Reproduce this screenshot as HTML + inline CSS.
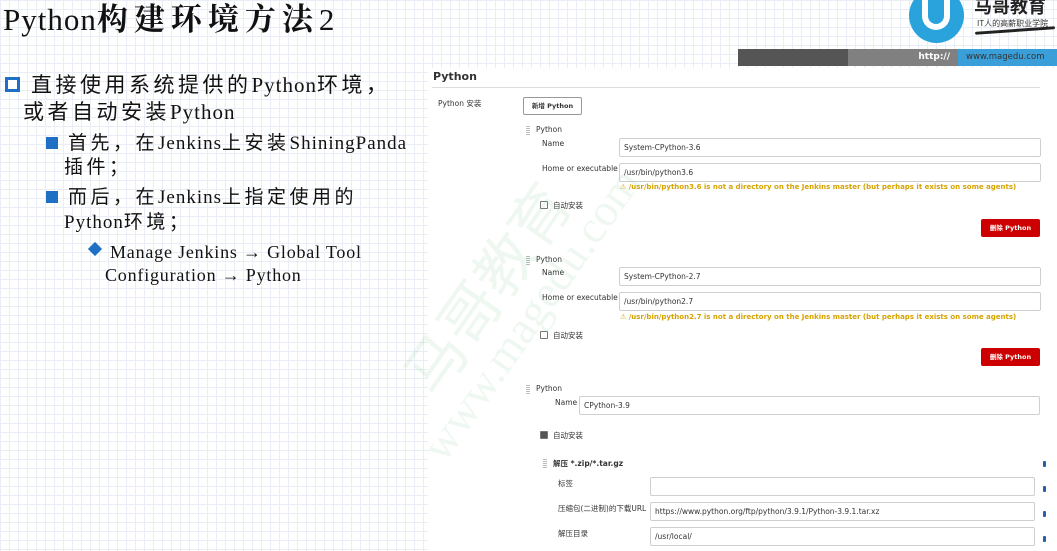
<!DOCTYPE html>
<html><head><meta charset="utf-8"><style>
*{margin:0;padding:0;box-sizing:border-box}
body{width:1057px;height:551px;overflow:hidden;position:relative;background:#fff;
background-image:linear-gradient(#e9edf5 1px,transparent 1px),linear-gradient(90deg,#e9edf5 1px,transparent 1px);background-size:9px 9px;
font-family:"Liberation Serif","Noto Serif CJK SC",serif;color:#111}
.a{position:absolute;white-space:nowrap}
.s{font-family:"Liberation Serif","Noto Sans CJK SC",serif;letter-spacing:3.5px}
.s i{font-style:normal;letter-spacing:1px}
.p{font-family:"DejaVu Sans","Noto Sans CJK SC",sans-serif;color:#333}
.in{position:absolute;border:1px solid #cfcfcf;background:#fff;border-radius:2px;font-family:"DejaVu Sans","Noto Sans CJK SC",sans-serif;font-size:7.5px;color:#333;padding:0 0 0 4px;line-height:17px}
.warn{position:absolute;font-family:"DejaVu Sans",sans-serif;font-size:7px;font-weight:bold;color:#d6a400;white-space:nowrap}
.red{position:absolute;background:#cc0000;color:#fff;font-family:"DejaVu Sans","Noto Sans CJK SC",sans-serif;font-size:6.5px;font-weight:bold;text-align:center;line-height:18px;border-radius:2px;width:59px;height:18px}
.grip{position:absolute;width:4px;height:10px;background:repeating-linear-gradient(#bbb 0 1px,transparent 1px 2px)}
.cb{position:absolute;width:8px;height:8px;border:1px solid #777;border-radius:1px;background:#fff}
.dot{position:absolute;width:3px;height:6px;background:#2a5ea8;border-radius:1px;left:1043px}
</style></head><body>
<div class="a" style="left:3px;top:0;font-size:31px;line-height:40px;letter-spacing:1px;font-family:'Liberation Serif','Noto Serif CJK SC',serif">Python<span style="font-weight:bold;letter-spacing:6px">构建环境方法</span>2</div>

<!-- logo -->
<div class="a" style="left:909px;top:-12px;width:55px;height:55px;border-radius:50%;background:#2aa3dd"></div>
<div class="a" style="left:922px;top:-4px;width:28px;height:34px;border:6px solid #fff;border-top:none;border-radius:0 0 14px 14px"></div>
<div class="a" style="left:974px;top:-7px;font-size:18px;font-weight:bold;font-family:'Noto Sans CJK SC',sans-serif;color:#222">马哥教育</div>
<div class="a" style="left:977px;top:18px;font-size:8px;font-family:'Noto Sans CJK SC',sans-serif;color:#333">IT人的高薪职业学院</div>
<div class="a" style="left:975px;top:29px;width:80px;height:3px;background:#222;transform:rotate(-4deg);border-radius:2px"></div>
<div class="a" style="left:738px;top:49px;width:110px;height:17px;background:#555"></div>
<div class="a" style="left:848px;top:49px;width:110px;height:17px;background:#808080;color:#fff;font:bold 9px/17px 'DejaVu Sans',sans-serif;text-align:right;padding-right:8px">http://</div>
<div class="a" style="left:958px;top:49px;width:99px;height:17px;background:#3a9fd8;color:#333;font:8.5px/17px 'DejaVu Sans',sans-serif;padding-left:8px">www.magedu.com</div>

<!-- left bullets -->
<div class="a" style="left:5px;top:77px;width:15px;height:15px;border:3px solid #1f6fc5;background:#fff"></div>
<div class="a s" style="left:31px;top:72px;font-size:21px;line-height:26px">直接使用系统提供的<i>Python</i>环境，</div>
<div class="a s" style="left:23px;top:99px;font-size:21px;line-height:26px">或者自动安装<i>Python</i></div>
<div class="a" style="left:46px;top:137px;width:12px;height:12px;background:#1f6fc5"></div>
<div class="a s" style="left:68px;top:132px;font-size:19px;line-height:24px">首先，在<i>Jenkins</i>上安装<i>ShiningPanda</i></div>
<div class="a s" style="left:64px;top:156px;font-size:19px;line-height:24px">插件；</div>
<div class="a" style="left:46px;top:191px;width:12px;height:12px;background:#1f6fc5"></div>
<div class="a s" style="left:68px;top:186px;font-size:19px;line-height:24px">而后，在<i>Jenkins</i>上指定使用的</div>
<div class="a s" style="left:64px;top:211px;font-size:19px;line-height:24px"><i>Python</i>环境；</div>
<div class="a" style="left:90px;top:244px;width:10px;height:10px;background:#1f6fc5;transform:rotate(45deg)"></div>
<div class="a" style="left:110px;top:241px;font-size:18px;line-height:22px;letter-spacing:0.8px">Manage Jenkins <b>→</b> Global Tool</div>
<div class="a" style="left:105px;top:264px;font-size:18px;line-height:22px;letter-spacing:0.8px">Configuration <b>→</b> Python</div>

<!-- panel -->
<div class="a" style="left:428px;top:68px;width:629px;height:483px;background:#fff"></div>
<div class="a p" style="left:433px;top:70px;font-size:11px;font-weight:bold;color:#333">Python</div>
<div class="a" style="left:432px;top:87px;width:608px;height:1px;background:#ddd"></div>
<div class="a p" style="left:438px;top:98px;font-size:7.5px">Python 安装</div>
<div class="a p" style="left:523px;top:97px;width:59px;height:18px;border:1px solid #999;border-radius:2px;font-size:6.5px;font-weight:bold;text-align:center;line-height:16px">新增 Python</div>

<div class="grip" style="left:526px;top:126px"></div><div class="a p" style="left:536px;top:125px;font-size:7.5px">Python</div>
<div class="a p" style="left:542px;top:139px;font-size:7.5px">Name</div>
<div class="in" style="left:619px;top:138px;width:422px;height:19px">System-CPython-3.6</div>
<div class="a p" style="left:542px;top:164px;font-size:7.5px">Home or executable</div>
<div class="in" style="left:619px;top:163px;width:422px;height:19px">/usr/bin/python3.6</div>
<div class="warn" style="left:620px;top:183px">⚠ /usr/bin/python3.6 is not a directory on the Jenkins master (but perhaps it exists on some agents)</div>
<div class="cb" style="left:540px;top:201px"></div><div class="a p" style="left:553px;top:200px;font-size:7.5px">自动安装</div>
<div class="red" style="left:981px;top:219px">删除 Python</div>

<div class="grip" style="left:526px;top:256px"></div><div class="a p" style="left:536px;top:255px;font-size:7.5px">Python</div>
<div class="a p" style="left:542px;top:268px;font-size:7.5px">Name</div>
<div class="in" style="left:619px;top:267px;width:422px;height:19px">System-CPython-2.7</div>
<div class="a p" style="left:542px;top:293px;font-size:7.5px">Home or executable</div>
<div class="in" style="left:619px;top:292px;width:422px;height:19px">/usr/bin/python2.7</div>
<div class="warn" style="left:620px;top:313px">⚠ /usr/bin/python2.7 is not a directory on the Jenkins master (but perhaps it exists on some agents)</div>
<div class="cb" style="left:540px;top:331px"></div><div class="a p" style="left:553px;top:330px;font-size:7.5px">自动安装</div>
<div class="red" style="left:981px;top:348px">删除 Python</div>

<div class="grip" style="left:526px;top:385px"></div><div class="a p" style="left:536px;top:384px;font-size:7.5px">Python</div>
<div class="a p" style="left:555px;top:398px;font-size:7.5px">Name</div>
<div class="in" style="left:579px;top:396px;width:461px;height:19px">CPython-3.9</div>
<div class="cb" style="left:540px;top:431px;background:#555"></div><div class="a p" style="left:553px;top:430px;font-size:7.5px">自动安装</div>
<div class="grip" style="left:543px;top:459px"></div><div class="a p" style="left:553px;top:458px;font-size:7.5px;font-weight:bold">解压 *.zip/*.tar.gz</div>
<div class="a p" style="left:558px;top:478px;font-size:7.5px">标签</div>
<div class="in" style="left:650px;top:477px;width:385px;height:19px"></div>
<div class="a p" style="left:558px;top:503px;font-size:7.5px">压缩包(二进制)的下载URL</div>
<div class="in" style="left:650px;top:502px;width:385px;height:19px">https://www.python.org/ftp/python/3.9.1/Python-3.9.1.tar.xz</div>
<div class="a p" style="left:558px;top:528px;font-size:7.5px">解压目录</div>
<div class="in" style="left:650px;top:527px;width:385px;height:19px">/usr/local/</div>
<div class="dot" style="top:461px"></div><div class="dot" style="top:486px"></div><div class="dot" style="top:511px"></div><div class="dot" style="top:536px"></div>

<!-- watermark -->
<div class="a" style="left:380px;top:360px;font-size:60px;color:rgba(120,200,150,.13);font-family:'Noto Sans CJK SC',sans-serif;transform:rotate(-55deg);transform-origin:left top">马哥教育</div>
<div class="a" style="left:410px;top:440px;font-size:46px;color:rgba(120,200,150,.13);font-family:'Liberation Serif',serif;transform:rotate(-55deg);transform-origin:left top">www.magedu.com</div>
</body></html>
